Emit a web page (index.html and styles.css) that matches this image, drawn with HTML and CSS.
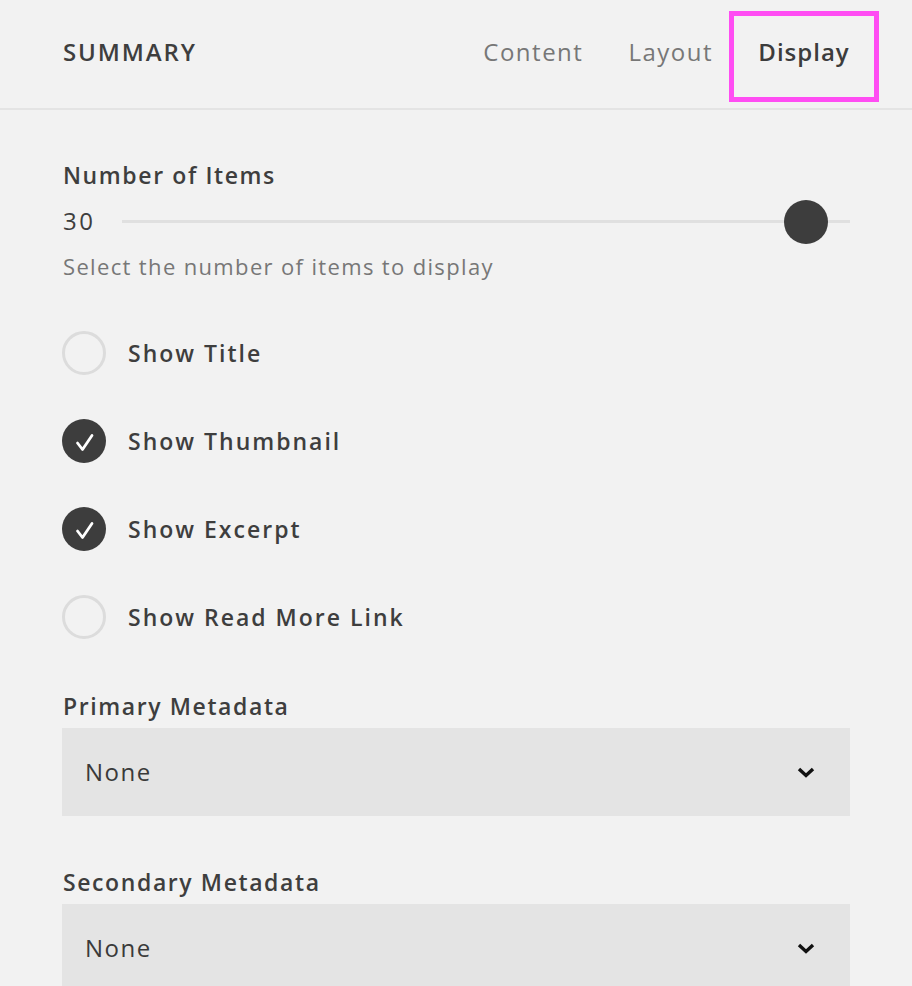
FILE: index.html
```html
<!DOCTYPE html>
<html lang="en">
<head>
<meta charset="utf-8">
<title>Summary – Display</title>
<link rel="stylesheet" href="styles.css">
</head>
<body>
<div class="panel">
  <header class="panel-header">
    <h1 class="panel-title">SUMMARY</h1>
    <nav class="tabs">
      <a class="tab">Content</a>
      <a class="tab">Layout</a>
      <a class="tab tab-active">Display</a>
    </nav>
  </header>

  <main class="panel-body">
    <div class="field">
      <div class="field-label">Number of Items</div>
      <div class="slider">
        <span class="slider-value">30</span>
        <div class="slider-track">
          <span class="slider-knob"></span>
        </div>
      </div>
      <div class="field-help">Select the number of items to display</div>
    </div>

    <ul class="checks">
      <li class="check">
        <span class="check-box"></span>
        <span class="check-label">Show Title</span>
      </li>
      <li class="check">
        <span class="check-box is-checked">
          <svg viewBox="0 0 44 44" width="44" height="44"><path d="M15.5 24 L20.5 30.5 L30 16.5" fill="none" stroke="#fff" stroke-width="2.8" stroke-linecap="round" stroke-linejoin="round"/></svg>
        </span>
        <span class="check-label">Show Thumbnail</span>
      </li>
      <li class="check">
        <span class="check-box is-checked">
          <svg viewBox="0 0 44 44" width="44" height="44"><path d="M15.5 24 L20.5 30.5 L30 16.5" fill="none" stroke="#fff" stroke-width="2.8" stroke-linecap="round" stroke-linejoin="round"/></svg>
        </span>
        <span class="check-label">Show Excerpt</span>
      </li>
      <li class="check">
        <span class="check-box"></span>
        <span class="check-label">Show Read More Link</span>
      </li>
    </ul>

    <div class="select-field">
      <div class="field-label">Primary Metadata</div>
      <div class="select">
        <span class="select-value">None</span>
        <svg class="select-arrow" viewBox="0 0 18 11" width="18" height="11"><path d="M2 2 L9 8.5 L16 2" fill="none" stroke="#111" stroke-width="3.4"/></svg>
      </div>
    </div>

    <div class="select-field select-field-2">
      <div class="field-label">Secondary Metadata</div>
      <div class="select">
        <span class="select-value">None</span>
        <svg class="select-arrow" viewBox="0 0 18 11" width="18" height="11"><path d="M2 2 L9 8.5 L16 2" fill="none" stroke="#111" stroke-width="3.4"/></svg>
      </div>
    </div>
  </main>
</div>
</body>
</html>
```

FILE: styles.css
```css
* { box-sizing: border-box; }

html, body {
  margin: 0;
  padding: 0;
  background: #f2f2f2;
}

body {
  font-family: "Open Sans", "Liberation Sans", sans-serif;
  color: #3e3e3e;
  overflow: hidden;
  height: 986px;
}

.panel-header {
  display: flex;
  align-items: flex-start;
  justify-content: space-between;
  height: 110px;
  padding: 11px 33px 0 63px;
  border-bottom: 2px solid #e4e4e4;
}

.panel-title {
  margin: 24px 0 0;
  font-size: 24px;
  font-weight: 600;
  letter-spacing: 1.9px;
  line-height: 34px;
  color: #3e3e3e;
}

.tabs {
  display: flex;
  align-items: flex-start;
}

.tab {
  display: block;
  font-size: 24px;
  letter-spacing: 1.5px;
  line-height: 34px;
  color: #777;
  margin-top: 24px;
  margin-left: 45px;
}

.tab-active {
  margin-top: 0;
  margin-left: 16px;
  width: 150px;
  height: 91px;
  border: 5px solid #ff4df3;
  padding-top: 19px;
  text-align: center;
  letter-spacing: 1px;
  color: #3c3c3c;
  font-weight: 600;
}

.panel-body {
  padding: 48px 62px 0;
}

.field-label {
  font-size: 23px;
  font-weight: 600;
  letter-spacing: 1.6px;
  line-height: 34px;
  color: #3e3e3e;
  padding-left: 1px;
}

.slider {
  display: flex;
  align-items: center;
  height: 44px;
  margin-top: 7px;
}

.slider-value {
  width: 60px;
  padding-left: 1px;
  font-size: 24px;
  letter-spacing: 2.5px;
  line-height: 34px;
}

.slider-track {
  position: relative;
  flex: 1;
  height: 3px;
  background: #e0e0e0;
}

.slider-knob {
  position: absolute;
  left: 662px;
  top: -20px;
  width: 44px;
  height: 44px;
  border-radius: 50%;
  background: #3d3d3d;
}

.field-help {
  margin-top: 8px;
  padding-left: 1px;
  font-size: 22px;
  letter-spacing: 1.35px;
  line-height: 30px;
  color: #777;
}

.checks {
  list-style: none;
  margin: 28px 0 0;
  padding: 0;
}

.check {
  display: flex;
  align-items: center;
  height: 88px;
}

.check-box {
  flex: none;
  width: 44px;
  height: 44px;
  border-radius: 50%;
  border: 3px solid #dcdcdc;
  display: flex;
  align-items: center;
  justify-content: center;
}

.check-box.is-checked {
  border: none;
  background: #3d3d3d;
}

.check-label {
  margin-left: 22px;
  font-size: 23px;
  font-weight: 600;
  letter-spacing: 2px;
  line-height: 34px;
  color: #3e3e3e;
}

.select-field {
  margin-top: 28px;
}

.select-field-2 {
  margin-top: 49px;
}

.select {
  display: flex;
  align-items: center;
  justify-content: space-between;
  height: 88px;
  margin-top: 5px;
  padding: 0 35px 0 23px;
  background: #e4e4e4;
}

.select-value {
  font-size: 24px;
  letter-spacing: 1.5px;
  line-height: 34px;
  color: #3a3a3a;
}

.select-arrow {
  display: block;
}
```
